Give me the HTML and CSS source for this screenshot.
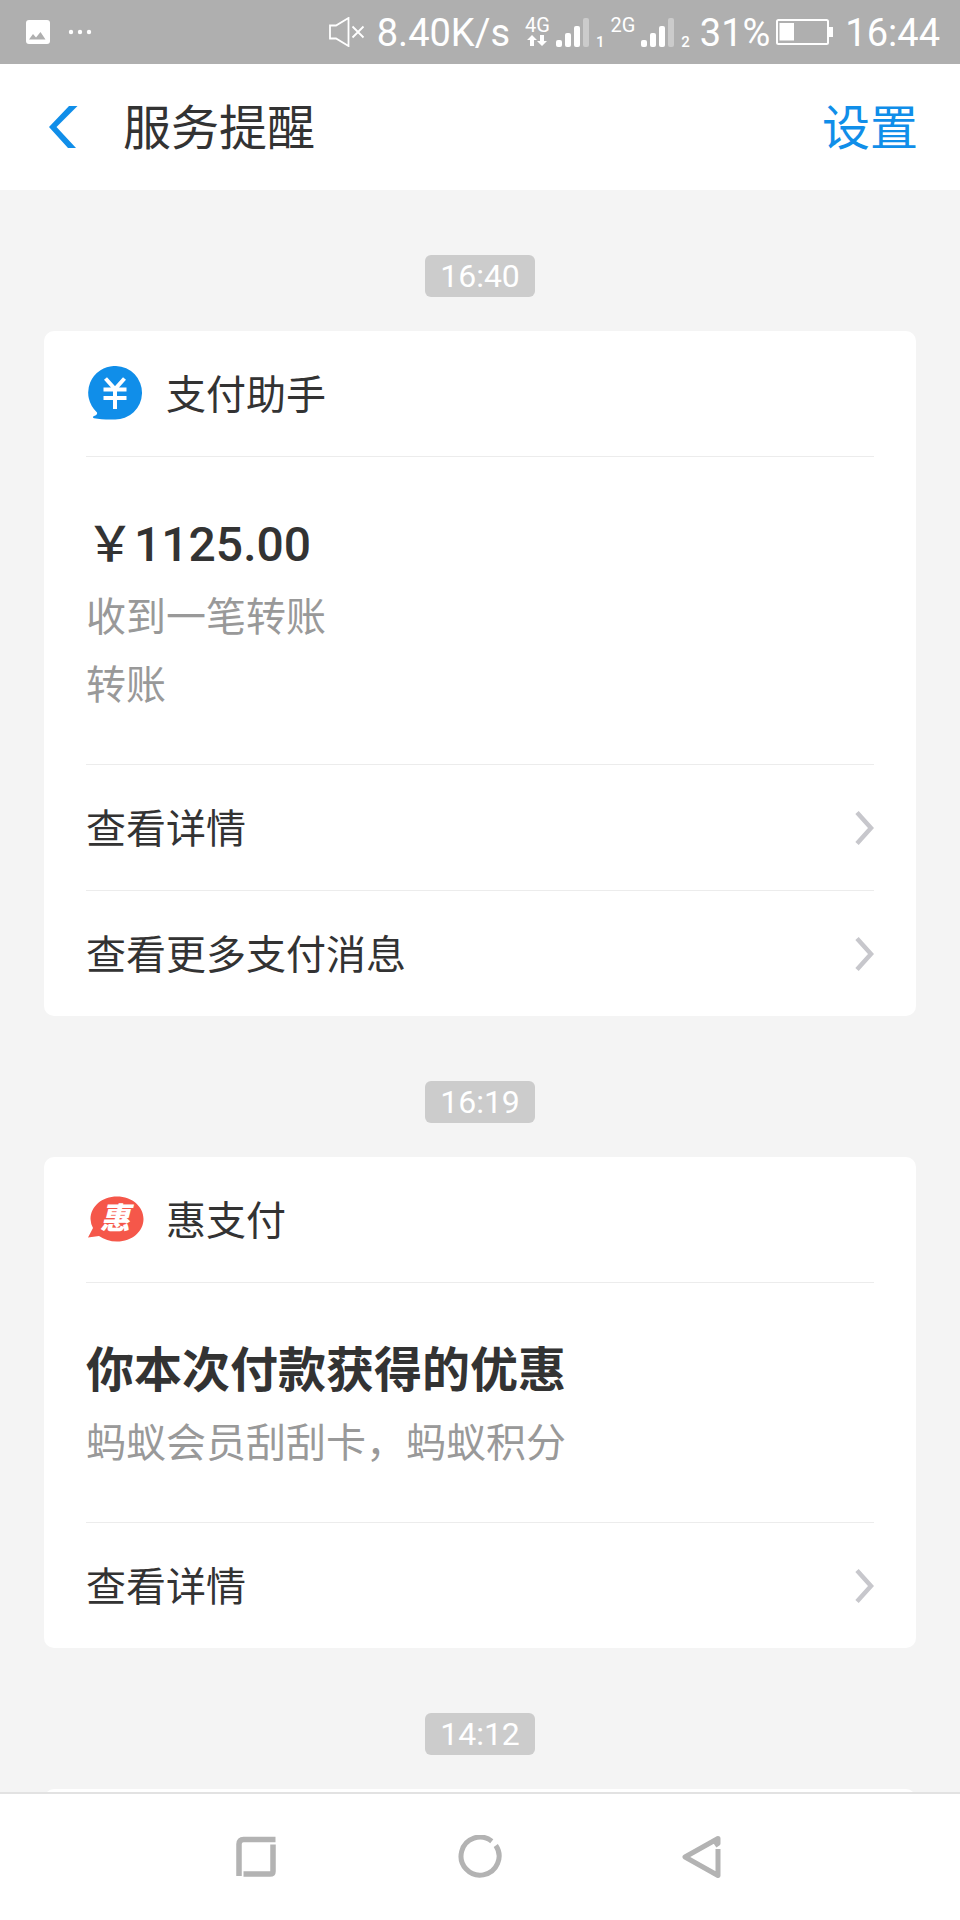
FILE: index.html
```html
<!DOCTYPE html>
<html lang="zh-CN">
<head>
<meta charset="utf-8">
<meta name="viewport" content="width=device-width, initial-scale=1">
<title>服务提醒</title>
<link rel="stylesheet" href="styles.css">
</head>
<body>
<div class="app">
  <div class="status">
    <div class="status-left">
      <svg width="24" height="24" viewBox="0 0 24 24" aria-hidden="true"><rect width="24" height="24" rx="3" fill="#fff"/><path d="M3 19.500L7 14l3 3.500L14.500 12l5 7.500z" fill="#afafaf"/></svg>
      <svg width="24" height="24" viewBox="0 0 24 24" fill="#fff" aria-hidden="true"><circle cx="3" cy="12" r="2.200"/><circle cx="12" cy="12" r="2.200"/><circle cx="21" cy="12" r="2.200"/></svg>
    </div>
    <div class="status-right">
      <svg width="36" height="30" viewBox="0 0 36 30" fill="none" stroke="#fff" aria-hidden="true"><path d="M1 8.500h6L19.500 1v28L7 21.500H1z" stroke-width="1.800"/><path d="M23.500 9.500l11 11M34.500 9.500l-11 11" stroke-width="1.800"/></svg>
      <span class="speed">8.40K/s</span>
      <div class="network">
        <span class="network-type">4G</span>
        <svg width="20" height="11" viewBox="0 0 20 11" fill="#fff" aria-hidden="true"><path d="M5 0l5 5H7v6H3V5H0zM15 11l-5-5h3V0h4v6h3z"/></svg>
      </div>
      <svg class="signal" width="34" height="29" viewBox="0 0 34 29" fill="#fff" aria-hidden="true"><rect y="22" width="6" height="7" rx="2"/><rect x="9" y="15" width="6" height="14" rx="2"/><rect x="18" y="8" width="6" height="21" rx="2"/><rect x="27" width="6" height="29" rx="2" opacity=".35"/></svg>
      <span class="sim">1</span>
      <div class="network"><span class="network-type">2G</span></div>
      <svg class="signal" width="34" height="29" viewBox="0 0 34 29" fill="#fff" aria-hidden="true"><rect y="22" width="6" height="7" rx="2"/><rect x="9" y="15" width="6" height="14" rx="2"/><rect x="18" y="8" width="6" height="21" rx="2"/><rect x="27" width="6" height="29" rx="2" opacity=".35"/></svg>
      <span class="sim">2</span>
      <span class="percent">31%</span>
      <svg class="battery" width="57" height="26" viewBox="0 0 57 26" aria-hidden="true"><rect x="1" y="1" width="51" height="24" rx="1.500" fill="none" stroke="#fff" stroke-width="2"/><path d="M3.500 4H18v17.500H3.500zM53 8h4v10h-4z" fill="#fff"/></svg>
      <span class="clock">16:44</span>
    </div>
  </div>

  <header class="header">
    <button class="back" type="button" aria-label="返回"><svg width="30" height="42" viewBox="0 0 30 42" aria-hidden="true"><path d="M21 0h8.500L8.500 21 28 42h-8L1 21z" fill="#108ee9"/></svg></button>
    <h1 class="title">服务提醒</h1>
    <a class="settings" href="#settings">设置</a>
  </header>

  <main class="feed">
    <time class="stamp">16:40</time>
    <section class="card">
      <div class="card-head">
        <svg class="card-icon" width="58" height="56" viewBox="0 0 58 56" aria-hidden="true"><path d="M30 0A26.700 26.700 0 1 1 28.500 53.500c-7 .3-15-.2-20.500-1.300-1.500-.4-1.300-1.600 0-2.100 2.300-.9 3.500-2 3-3.600A26.700 26.700 0 0 1 30 0z" fill="#108ee9"/><path d="M19.500 12.500L29 23l9.500-10.500M17.500 23.500h23M17.500 32h23M29 23v20" fill="none" stroke="#fff" stroke-width="4"/></svg>
        <h2 class="card-name">支付助手</h2>
      </div>
      <div class="card-body">
        <p class="headline">￥1125.00</p>
        <p class="detail">收到一笔转账</p>
        <p class="detail">转账</p>
      </div>
      <a class="action" href="#detail"><span class="action-label">查看详情</span><svg width="19" height="34" viewBox="0 0 19 34" aria-hidden="true"><path d="M2 1.500L16 17 2 32.500" fill="none" stroke="#c7c7cc" stroke-width="4.500"/></svg></a>
      <a class="action" href="#more"><span class="action-label">查看更多支付消息</span><svg width="19" height="34" viewBox="0 0 19 34" aria-hidden="true"><path d="M2 1.500L16 17 2 32.500" fill="none" stroke="#c7c7cc" stroke-width="4.500"/></svg></a>
    </section>

    <time class="stamp">16:19</time>
    <section class="card">
      <div class="card-head">
        <svg class="card-icon" width="58" height="56" viewBox="0 0 58 56" aria-hidden="true"><path d="M31 4.500c15 0 26.500 10 26.500 22.500S46 49.500 31 49.500c-7 0-13-2-18-5.500L2 45.500l5-9.500A20 20 0 0 1 4.500 27C4.500 14.500 16 4.500 31 4.500z" fill="#f5574a"/><text class="bubble-text" x="29" y="37" text-anchor="middle">惠</text></svg>
        <h2 class="card-name">惠支付</h2>
      </div>
      <div class="card-body">
        <p class="headline headline-text">你本次付款获得的优惠</p>
        <p class="detail">蚂蚁会员刮刮卡，蚂蚁积分</p>
      </div>
      <a class="action" href="#discount"><span class="action-label">查看详情</span><svg width="19" height="34" viewBox="0 0 19 34" aria-hidden="true"><path d="M2 1.500L16 17 2 32.500" fill="none" stroke="#c7c7cc" stroke-width="4.500"/></svg></a>
    </section>

    <time class="stamp">14:12</time>
    <section class="card"><div class="card-head"></div></section>
  </main>

  <nav class="nav">
    <button class="nav-button" type="button" aria-label="最近任务"><svg width="44" height="44" viewBox="0 0 44 44" fill="none" stroke="#b3b3b3" stroke-width="5.500" aria-hidden="true"><path d="M41.500 4.500H9.500Q5 4.500 5 9V41M39 9.500v27q0 2.500-3 2.500H9.500"/></svg></button>
    <button class="nav-button" type="button" aria-label="主屏幕"><svg width="44" height="44" viewBox="0 0 44 44" fill="none" stroke="#b3b3b3" stroke-width="5" aria-hidden="true"><path d="M33.800 6.200A19 19 0 1 0 37.800 10.500"/></svg></button>
    <button class="nav-button" type="button" aria-label="返回"><svg width="44" height="44" viewBox="0 0 44 44" fill="none" stroke="#b3b3b3" stroke-width="5" stroke-linejoin="round" aria-hidden="true"><path d="M33 10.500l3-2V3.500L3 22l33 18.500V14"/></svg></button>
  </nav>
</div>
</body>
</html>
```
FILE: styles.css
```css
* {
  box-sizing: border-box;
  margin: 0;
  padding: 0;
}

body {
  font-family: Roboto, "Noto Sans CJK SC", sans-serif;
  line-height: 60px;
  color: #333;
  background: #f4f4f4;
}

svg {
  display: block;
  flex: none;
}

button {
  border: 0;
  background: none;
}

a {
  color: inherit;
  text-decoration: none;
}

.app {
  display: flex;
  flex-direction: column;
  height: 100vh;
}

.status {
  display: flex;
  flex: none;
  align-items: center;
  justify-content: space-between;
  height: 64px;
  padding: 0 20px 0 26px;
  background: #afafaf;
  color: #fff;
  font-size: 38px;
  line-height: 64px;
}

.status-left,
.status-right {
  display: flex;
  align-items: center;
}

.status-left {
  gap: 18px;
}

.speed,
.percent,
.clock {
  padding-top: 2px;
}

.speed {
  margin: 0 15px 0 12px;
}

.network {
  display: flex;
  flex-direction: column;
  align-items: center;
  height: 30px;
  gap: 2px;
}

.network-type {
  font-size: 20px;
  line-height: 16px;
}

.signal {
  margin: 0 6px;
}

.sim {
  align-self: flex-end;
  padding-bottom: 14px;
  font-size: 15px;
  font-weight: 500;
  line-height: 18px;
  margin-right: 6px;
}

.percent {
  margin: 0 6px 0 4px;
}

.battery {
  margin-right: 12px;
}

.header {
  display: flex;
  flex: none;
  align-items: center;
  height: 126px;
  padding: 0 42px 0 48px;
  background: #fff;
  font-size: 48px;
}

.back {
  margin-right: 45px;
  cursor: pointer;
}

.title {
  flex: 1;
  padding-top: 4px;
  font-size: 48px;
  font-weight: 400;
}

.settings {
  padding-top: 4px;
  color: #108ee9;
}

.feed {
  display: flex;
  flex: 1;
  flex-direction: column;
  min-height: 0;
  padding: 0 44px;
  overflow-y: auto;
  scrollbar-width: none;
}

.stamp {
  flex: none;
  align-self: center;
  margin: 65px 0 34px;
  padding: 0 15px;
  border-radius: 6px;
  background: #ccc;
  color: #fff;
  font-size: 32px;
  line-height: 42px;
}

.card {
  flex: none;
  padding: 0 42px;
  border-radius: 10px;
  background: #fff;
  font-size: 40px;
}

.card-head {
  display: flex;
  align-items: center;
  gap: 22px;
  height: 126px;
  border-bottom: 1px solid #ececec;
}

.card-name {
  padding-top: 4px;
  font-size: 40px;
  font-weight: 400;
}

.bubble-text {
  fill: #fff;
  font-family: "Noto Sans CJK SC", sans-serif;
  font-size: 30px;
  font-style: italic;
  font-weight: 900;
}

.card-body {
  padding: 52px 0 44px;
}

.headline {
  margin-bottom: 3px;
  font-size: 48px;
  font-weight: 500;
  line-height: 72px;
}

.headline-text {
  font-weight: 700;
}

.detail {
  color: #999;
  line-height: 68px;
}

.action {
  display: flex;
  align-items: center;
  justify-content: space-between;
  height: 126px;
  border-top: 1px solid #ececec;
}

.action-label {
  padding-top: 4px;
}

.nav {
  display: flex;
  flex: none;
  height: 128px;
  padding: 0 15%;
  border-top: 2px solid #e2e2e2;
  background: #fff;
}

.nav-button {
  display: flex;
  flex: 1;
  align-items: center;
  justify-content: center;
  cursor: pointer;
}
```
